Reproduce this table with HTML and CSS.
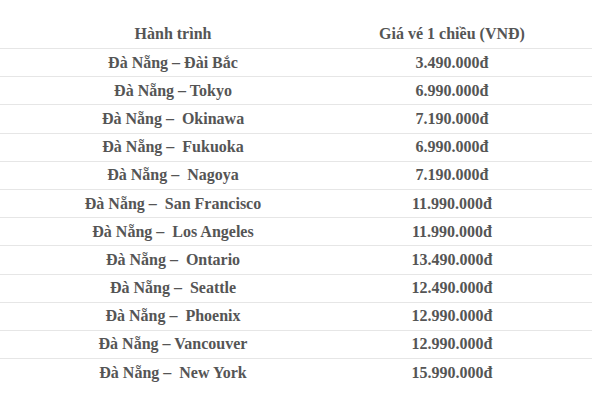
FILE: index.html
```html
<!DOCTYPE html>
<html lang="vi">
<head>
<meta charset="utf-8">
<link rel="stylesheet" href="styles.css">
</head>
<body>
<div class="table">
  <div class="row head"><div class="c1">Hành trình</div><div class="c2">Giá vé 1 chiều (VNĐ)</div></div>
  <div class="row"><div class="c1">Đà Nẵng – Đài Bắc</div><div class="c2">3.490.000đ</div></div>
  <div class="row"><div class="c1">Đà Nẵng – Tokyo</div><div class="c2">6.990.000đ</div></div>
  <div class="row"><div class="c1">Đà Nẵng –&nbsp; Okinawa</div><div class="c2">7.190.000đ</div></div>
  <div class="row"><div class="c1">Đà Nẵng –&nbsp; Fukuoka</div><div class="c2">6.990.000đ</div></div>
  <div class="row"><div class="c1">Đà Nẵng –&nbsp; Nagoya</div><div class="c2">7.190.000đ</div></div>
  <div class="row"><div class="c1">Đà Nẵng –&nbsp; San Francisco</div><div class="c2">11.990.000đ</div></div>
  <div class="row"><div class="c1">Đà Nẵng –&nbsp; Los Angeles</div><div class="c2">11.990.000đ</div></div>
  <div class="row"><div class="c1">Đà Nẵng –&nbsp; Ontario</div><div class="c2">13.490.000đ</div></div>
  <div class="row"><div class="c1">Đà Nẵng –&nbsp; Seattle</div><div class="c2">12.490.000đ</div></div>
  <div class="row"><div class="c1">Đà Nẵng –&nbsp; Phoenix</div><div class="c2">12.990.000đ</div></div>
  <div class="row"><div class="c1">Đà Nẵng – Vancouver</div><div class="c2">12.990.000đ</div></div>
  <div class="row last"><div class="c1">Đà Nẵng –&nbsp; New York</div><div class="c2">15.990.000đ</div></div>
</div>
</body>
</html>
```
FILE: styles.css
```css
html, body {
  margin: 0;
  padding: 0;
  background: #fff;
}
body {
  font-family: "Liberation Serif", "Times New Roman", serif;
  font-weight: bold;
  font-size: 16px;
  color: #555;
}
.table {
  width: 592px;
  padding-top: 20px;
}
.row {
  display: grid;
  grid-template-columns: 346px 212px;
  align-items: center;
  height: 28.2px;
  box-sizing: border-box;
  border-top: 1px solid #e6e6e6;
}
.row.head {
  height: 28px;
  border-top: none;
}
.c1, .c2 {
  text-align: center;
  white-space: nowrap;
  line-height: 1;
}
```
